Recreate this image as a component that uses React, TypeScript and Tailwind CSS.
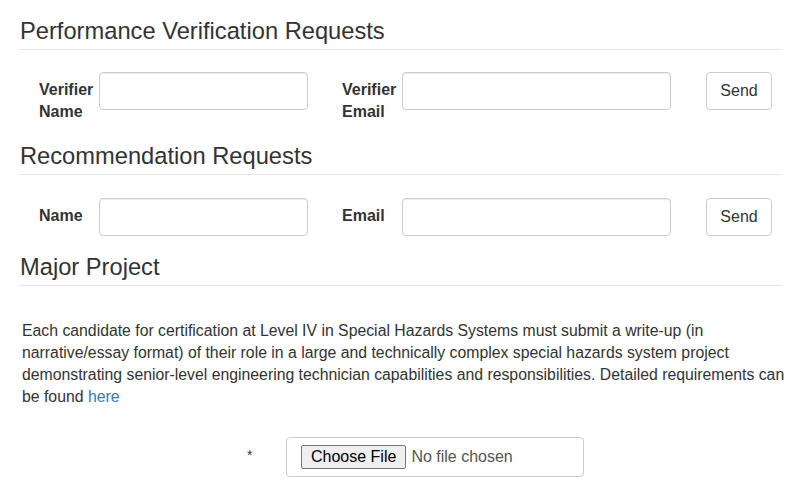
import React from 'react';

const font = { fontFamily: '"Liberation Sans", Arial, sans-serif' };

const SectionHeading = ({ title, className = '' }: { title: string; className?: string }) => (
  <h3 className={`text-[23.7px] leading-[26px] text-[#333] pt-[3px] pb-[5px] border-b border-[#e5e5e5] ${className}`}>
    {title}
  </h3>
);

const RequestRow = ({ first, second }: { first: React.ReactNode; second: React.ReactNode }) => (
  <div className="flex items-start">
    <label className="w-[60px] ml-[19px] pt-[7px] text-[16px] leading-[22px] font-bold text-[#333]">{first}</label>
    <input className="w-[209px] h-[38px] border border-[#ccc] rounded-[4px] bg-white shadow-[inset_0_1px_1px_rgba(0,0,0,0.075)]" />
    <label className="w-[60px] ml-[34px] pt-[7px] text-[16px] leading-[22px] font-bold text-[#333]">{second}</label>
    <input className="w-[269px] h-[38px] border border-[#ccc] rounded-[4px] bg-white shadow-[inset_0_1px_1px_rgba(0,0,0,0.075)]" />
    <button className="ml-[35px] w-[66px] h-[38px] border border-[#ccc] rounded-[4px] bg-white text-[16px] text-[#333]">
      Send
    </button>
  </div>
);

export default function App() {
  return (
    <div className="w-[792px] h-[492px] bg-white overflow-hidden pl-[20px] pr-[10px]" style={font}>
      <SectionHeading title="Performance Verification Requests" className="mt-[15px]" />
      <div className="mt-[22px]">
        <RequestRow
          first={<>Verifier<br />Name</>}
          second={<>Verifier<br />Email</>}
        />
      </div>

      <SectionHeading title="Recommendation Requests" className="mt-[17px]" />
      <div className="mt-[23px]">
        <RequestRow first="Name" second="Email" />
      </div>

      <SectionHeading title="Major Project" className="mt-[15px]" />
      <p className="mt-[34px] -mr-[10px] whitespace-nowrap text-[15.8px] leading-[22px] text-[#333] pl-[2px]">
        Each candidate for certification at Level IV in Special Hazards Systems must submit a write-up (in
        <br />
        narrative/essay format) of their role in a large and technically complex special hazards system project
        <br />
        demonstrating senior-level engineering technician capabilities and responsibilities. Detailed requirements can
        <br />
        be found <a className="text-[#337ab7]">here</a>
      </p>

      {/* Upload */}
      <div className="mt-[29px] flex items-start">
        <span className="ml-[227px] w-[39px] pt-[8px] text-[14px] text-[#333]">*</span>
        <div className="w-[298px] h-[40px] border border-[#ccc] rounded-[4px] flex items-center pl-[14px] text-[16px]">
          <span className="h-[24px] px-[9px] flex items-center bg-[#efefef] border border-[#767676] rounded-[2px] text-black">
            Choose File
          </span>
          <span className="ml-[5px] text-[#555]">No file chosen</span>
        </div>
      </div>
    </div>
  );
}
